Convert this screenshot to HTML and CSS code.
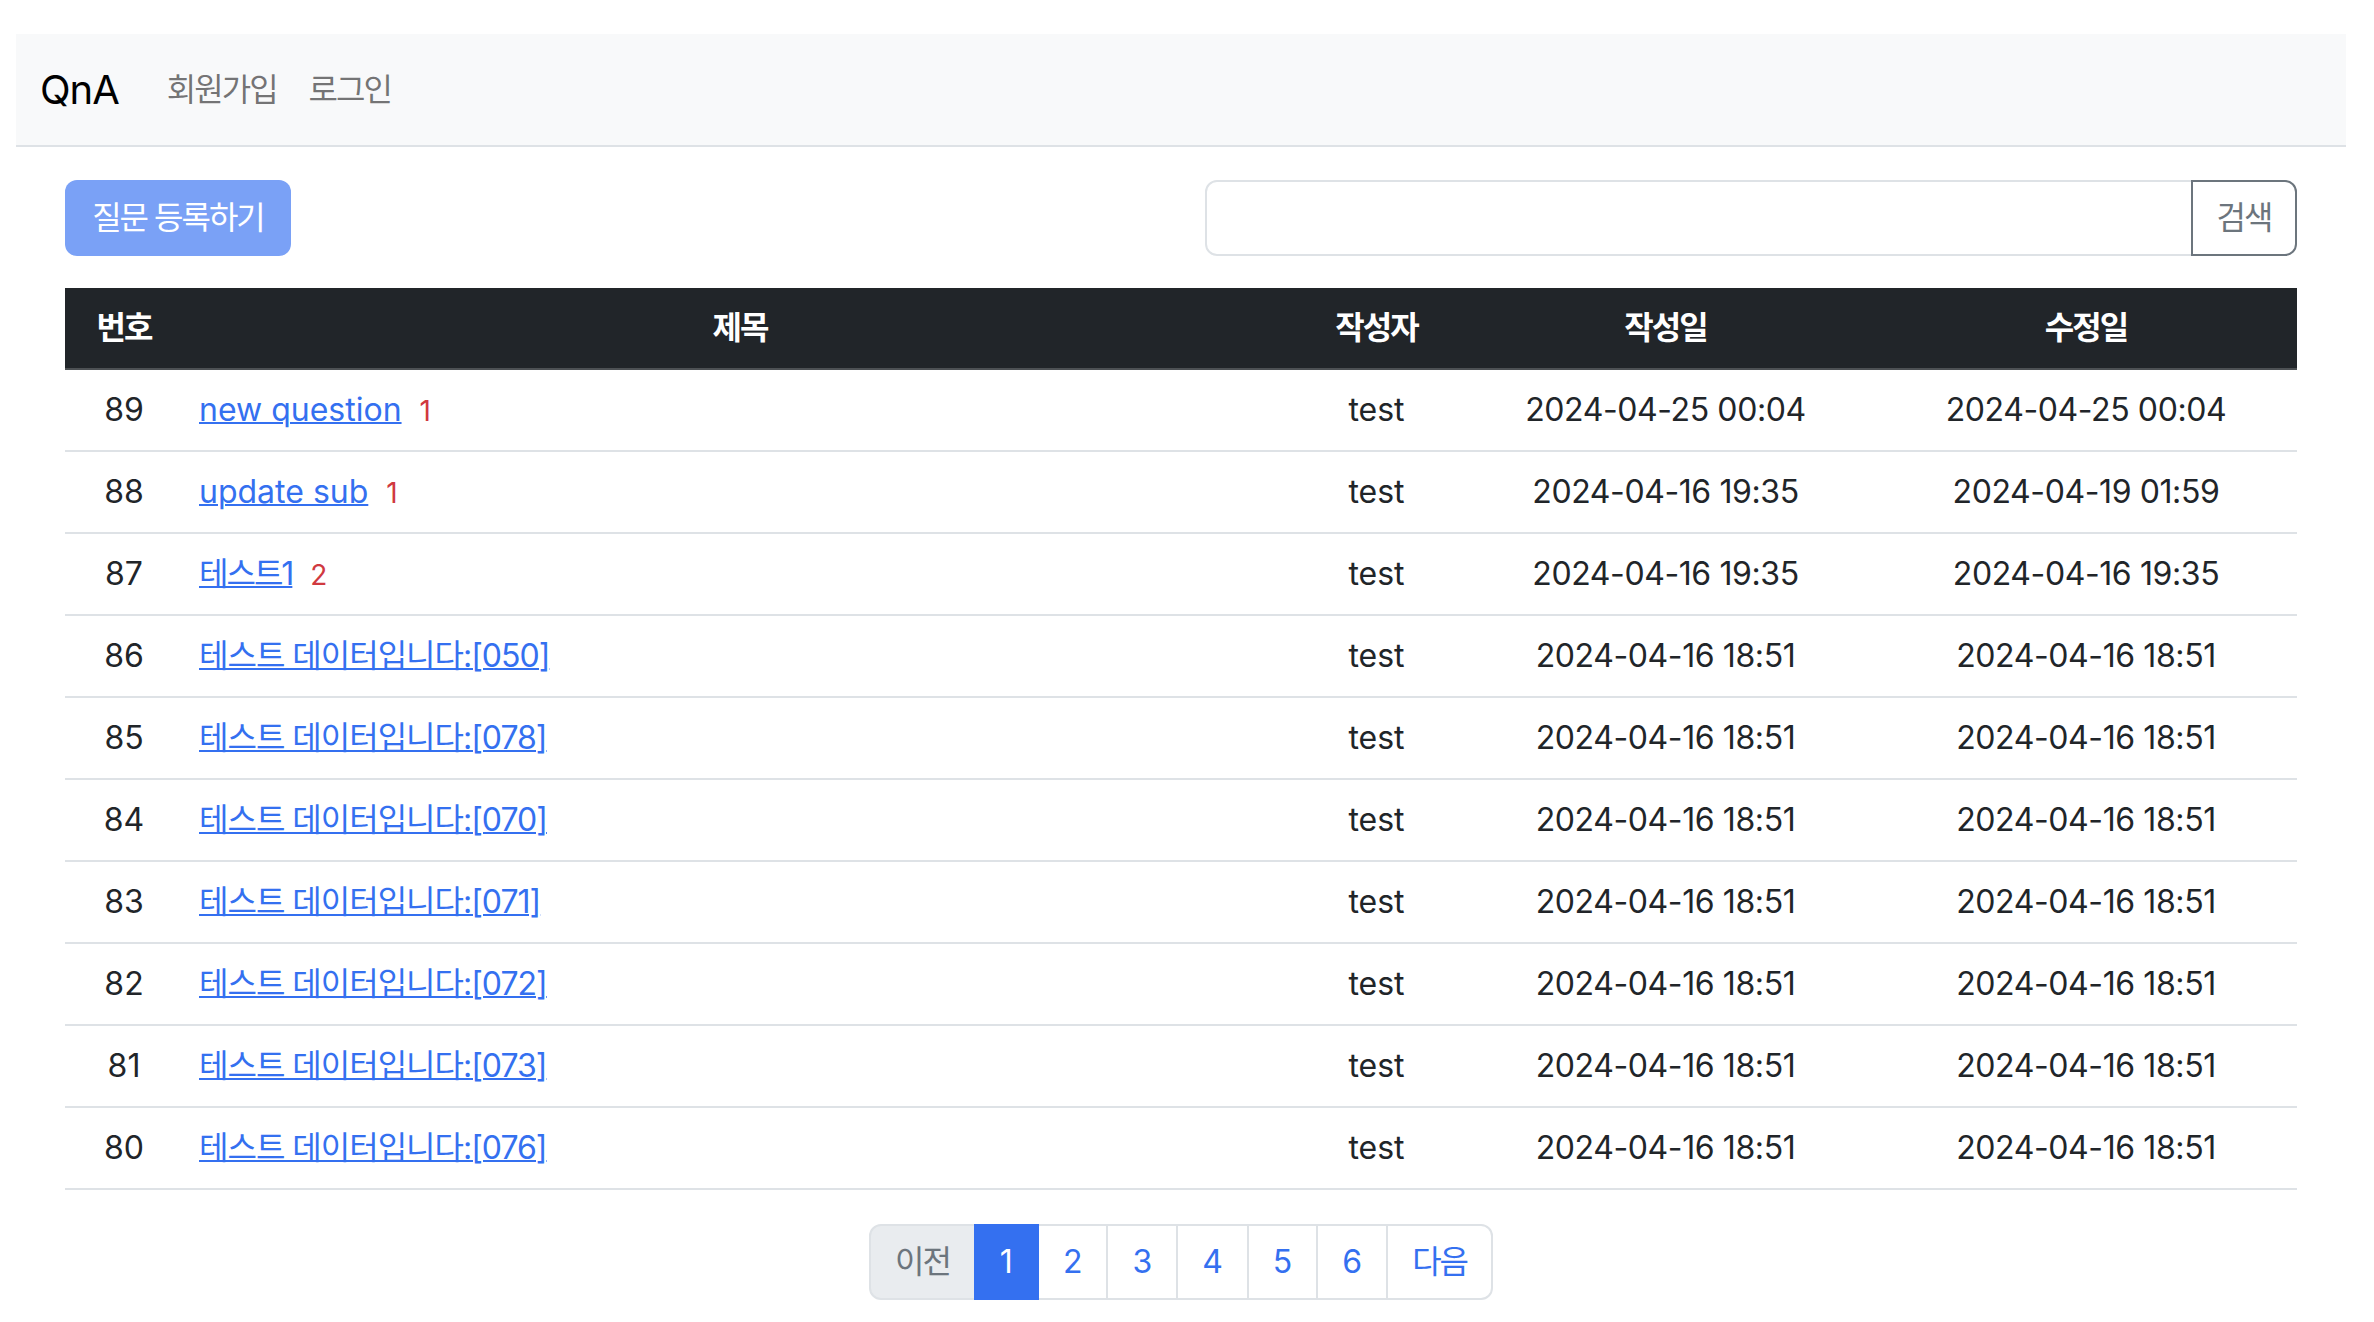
FILE: index.html
```html
<!DOCTYPE html>
<html lang="ko">
<head>
<meta charset="utf-8">
<title>QnA</title>
<link rel="stylesheet" href="styles.css">
</head>
<body>
<nav class="navbar">
  <a class="brand" href="#">QnA</a>
  <ul class="nav">
    <li><a class="nav-link ko" href="#">회원가입</a></li>
    <li><a class="nav-link ko" href="#">로그인</a></li>
  </ul>
</nav>
<main class="content">
  <div class="toolbar">
    <button class="btn-primary ko" disabled>질문 등록하기</button>
    <div class="input-group">
      <input class="search-input" type="text">
      <button class="btn-search ko">검색</button>
    </div>
  </div>
  <table class="board">
    <colgroup>
      <col class="c-no"><col class="c-title"><col class="c-author"><col class="c-date"><col class="c-date2">
    </colgroup>
    <thead>
      <tr><th class="ko">번호</th><th class="ko">제목</th><th class="ko">작성자</th><th class="ko">작성일</th><th class="ko">수정일</th></tr>
    </thead>
    <tbody>
      <tr><td class="center">89</td><td class="title"><a href="#">new question</a> <span class="cnt">1</span></td><td class="center">test</td><td class="center num">2024-04-25 00:04</td><td class="center num">2024-04-25 00:04</td></tr>
      <tr><td class="center">88</td><td class="title"><a href="#">update sub</a> <span class="cnt">1</span></td><td class="center">test</td><td class="center num">2024-04-16 19:35</td><td class="center num">2024-04-19 01:59</td></tr>
      <tr><td class="center">87</td><td class="title"><a class="ko" href="#">테스트1</a> <span class="cnt">2</span></td><td class="center">test</td><td class="center num">2024-04-16 19:35</td><td class="center num">2024-04-16 19:35</td></tr>
      <tr><td class="center">86</td><td class="title"><a class="mix" href="#">테스트 데이터입니다:[050]</a></td><td class="center">test</td><td class="center num">2024-04-16 18:51</td><td class="center num">2024-04-16 18:51</td></tr>
      <tr><td class="center">85</td><td class="title"><a class="mix" href="#">테스트 데이터입니다:[078]</a></td><td class="center">test</td><td class="center num">2024-04-16 18:51</td><td class="center num">2024-04-16 18:51</td></tr>
      <tr><td class="center">84</td><td class="title"><a class="mix" href="#">테스트 데이터입니다:[070]</a></td><td class="center">test</td><td class="center num">2024-04-16 18:51</td><td class="center num">2024-04-16 18:51</td></tr>
      <tr><td class="center">83</td><td class="title"><a class="mix" href="#">테스트 데이터입니다:[071]</a></td><td class="center">test</td><td class="center num">2024-04-16 18:51</td><td class="center num">2024-04-16 18:51</td></tr>
      <tr><td class="center">82</td><td class="title"><a class="mix" href="#">테스트 데이터입니다:[072]</a></td><td class="center">test</td><td class="center num">2024-04-16 18:51</td><td class="center num">2024-04-16 18:51</td></tr>
      <tr><td class="center">81</td><td class="title"><a class="mix" href="#">테스트 데이터입니다:[073]</a></td><td class="center">test</td><td class="center num">2024-04-16 18:51</td><td class="center num">2024-04-16 18:51</td></tr>
      <tr><td class="center">80</td><td class="title"><a class="mix" href="#">테스트 데이터입니다:[076]</a></td><td class="center">test</td><td class="center num">2024-04-16 18:51</td><td class="center num">2024-04-16 18:51</td></tr>
    </tbody>
  </table>
  <ul class="pagination">
    <li class="page disabled"><span class="page-link ko">이전</span></li>
    <li class="page active"><span class="page-link">1</span></li>
    <li class="page"><a class="page-link" href="#">2</a></li>
    <li class="page"><a class="page-link" href="#">3</a></li>
    <li class="page"><a class="page-link" href="#">4</a></li>
    <li class="page"><a class="page-link" href="#">5</a></li>
    <li class="page"><a class="page-link" href="#">6</a></li>
    <li class="page"><a class="page-link ko" href="#">다음</a></li>
  </ul>
</main>
</body>
</html>
```
FILE: styles.css
```css
* { box-sizing: border-box; }
html, body { margin: 0; padding: 0; background: #fff; }
body {
  font-family: Inter, "Noto Sans CJK KR", sans-serif;
  font-size: 32px;
  line-height: 48px;
  color: #212529;
}
a { color: #3470f0; }
.ko { letter-spacing: -2px; }
.mix { letter-spacing: -1px; }
.num { letter-spacing: -0.4px; }

.navbar {
  margin: 34px 28px 0 16px;
  height: 113px;
  background: #f8f9fa;
  border-bottom: 2px solid #dee2e6;
  display: flex;
  align-items: center;
  padding: 0 24px;
}
.brand {
  font-size: 40px;
  line-height: 60px;
  letter-spacing: -1px;
  color: #000;
  text-decoration: none;
  margin-right: 32px;
}
.nav { list-style: none; margin: 0; padding: 0; display: flex; }
.nav-link {
  display: block;
  padding: 0 16px;
  color: rgba(0, 0, 0, 0.55);
  text-decoration: none;
}

.content { margin: 33px 77px 0 65px; }

.toolbar {
  display: flex;
  justify-content: space-between;
  align-items: center;
}
.btn-primary {
  font: inherit;
  white-space: nowrap;
  width: 226px;
  height: 76px;
  padding: 12px 20px;
  border: 2px solid transparent;
  border-radius: 12px;
  background: #7aa1f6;
  color: #fff;
}
.input-group { display: flex; width: 1092px; height: 76px; }
.search-input {
  flex: 1;
  font: inherit;
  border: 2px solid #dee2e6;
  border-radius: 12px 0 0 12px;
  padding: 12px 24px;
  outline: none;
}
.btn-search {
  font: inherit;
  white-space: nowrap;
  width: 106px;
  margin-left: -2px;
  border: 2px solid #6c757d;
  border-radius: 0 12px 12px 0;
  background: #fff;
  color: #6c757d;
  padding: 0;
}

.board {
  margin-top: 32px;
  width: 100%;
  border-collapse: collapse;
  table-layout: fixed;
}
.c-no { width: 118px; }
.c-title { width: 1114px; }
.c-author { width: 159px; }
.c-date { width: 419px; }
.c-date2 { width: 422px; }
.board th {
  background: #212529;
  color: #fff;
  font-weight: 700;
  height: 81px;
  padding: 0 16px;
  vertical-align: middle;
  text-align: center;
  border-bottom: 2px solid #4d5154;
}
.board td {
  height: 82px;
  padding: 0 16px;
  vertical-align: middle;
  border-bottom: 2px solid #dee2e6;
  white-space: nowrap;
}
.board td.center { text-align: center; }
.board td.title { text-align: left; }
.board td.title a { text-decoration-thickness: 2px; }
.cnt { color: #d0393f; font-size: 28px; margin-left: 9px; }

.pagination {
  list-style: none;
  margin: 34px 0 0;
  padding: 0;
  display: flex;
  justify-content: center;
}
.page-link {
  display: block;
  height: 76px;
  padding: 12px 24px;
  border: 2px solid #dee2e6;
  margin-left: -2px;
  color: #3470f0;
  text-decoration: none;
  background: #fff;
  white-space: nowrap;
}
.page:first-child .page-link { border-radius: 12px 0 0 12px; margin-left: 0; }
.page:last-child .page-link { border-radius: 0 12px 12px 0; }
.page.disabled .page-link { background: #e9ecef; color: #6c757d; }
.page.active .page-link { background: #3470f0; border-color: #3470f0; color: #fff; position: relative; z-index: 1; }
```
